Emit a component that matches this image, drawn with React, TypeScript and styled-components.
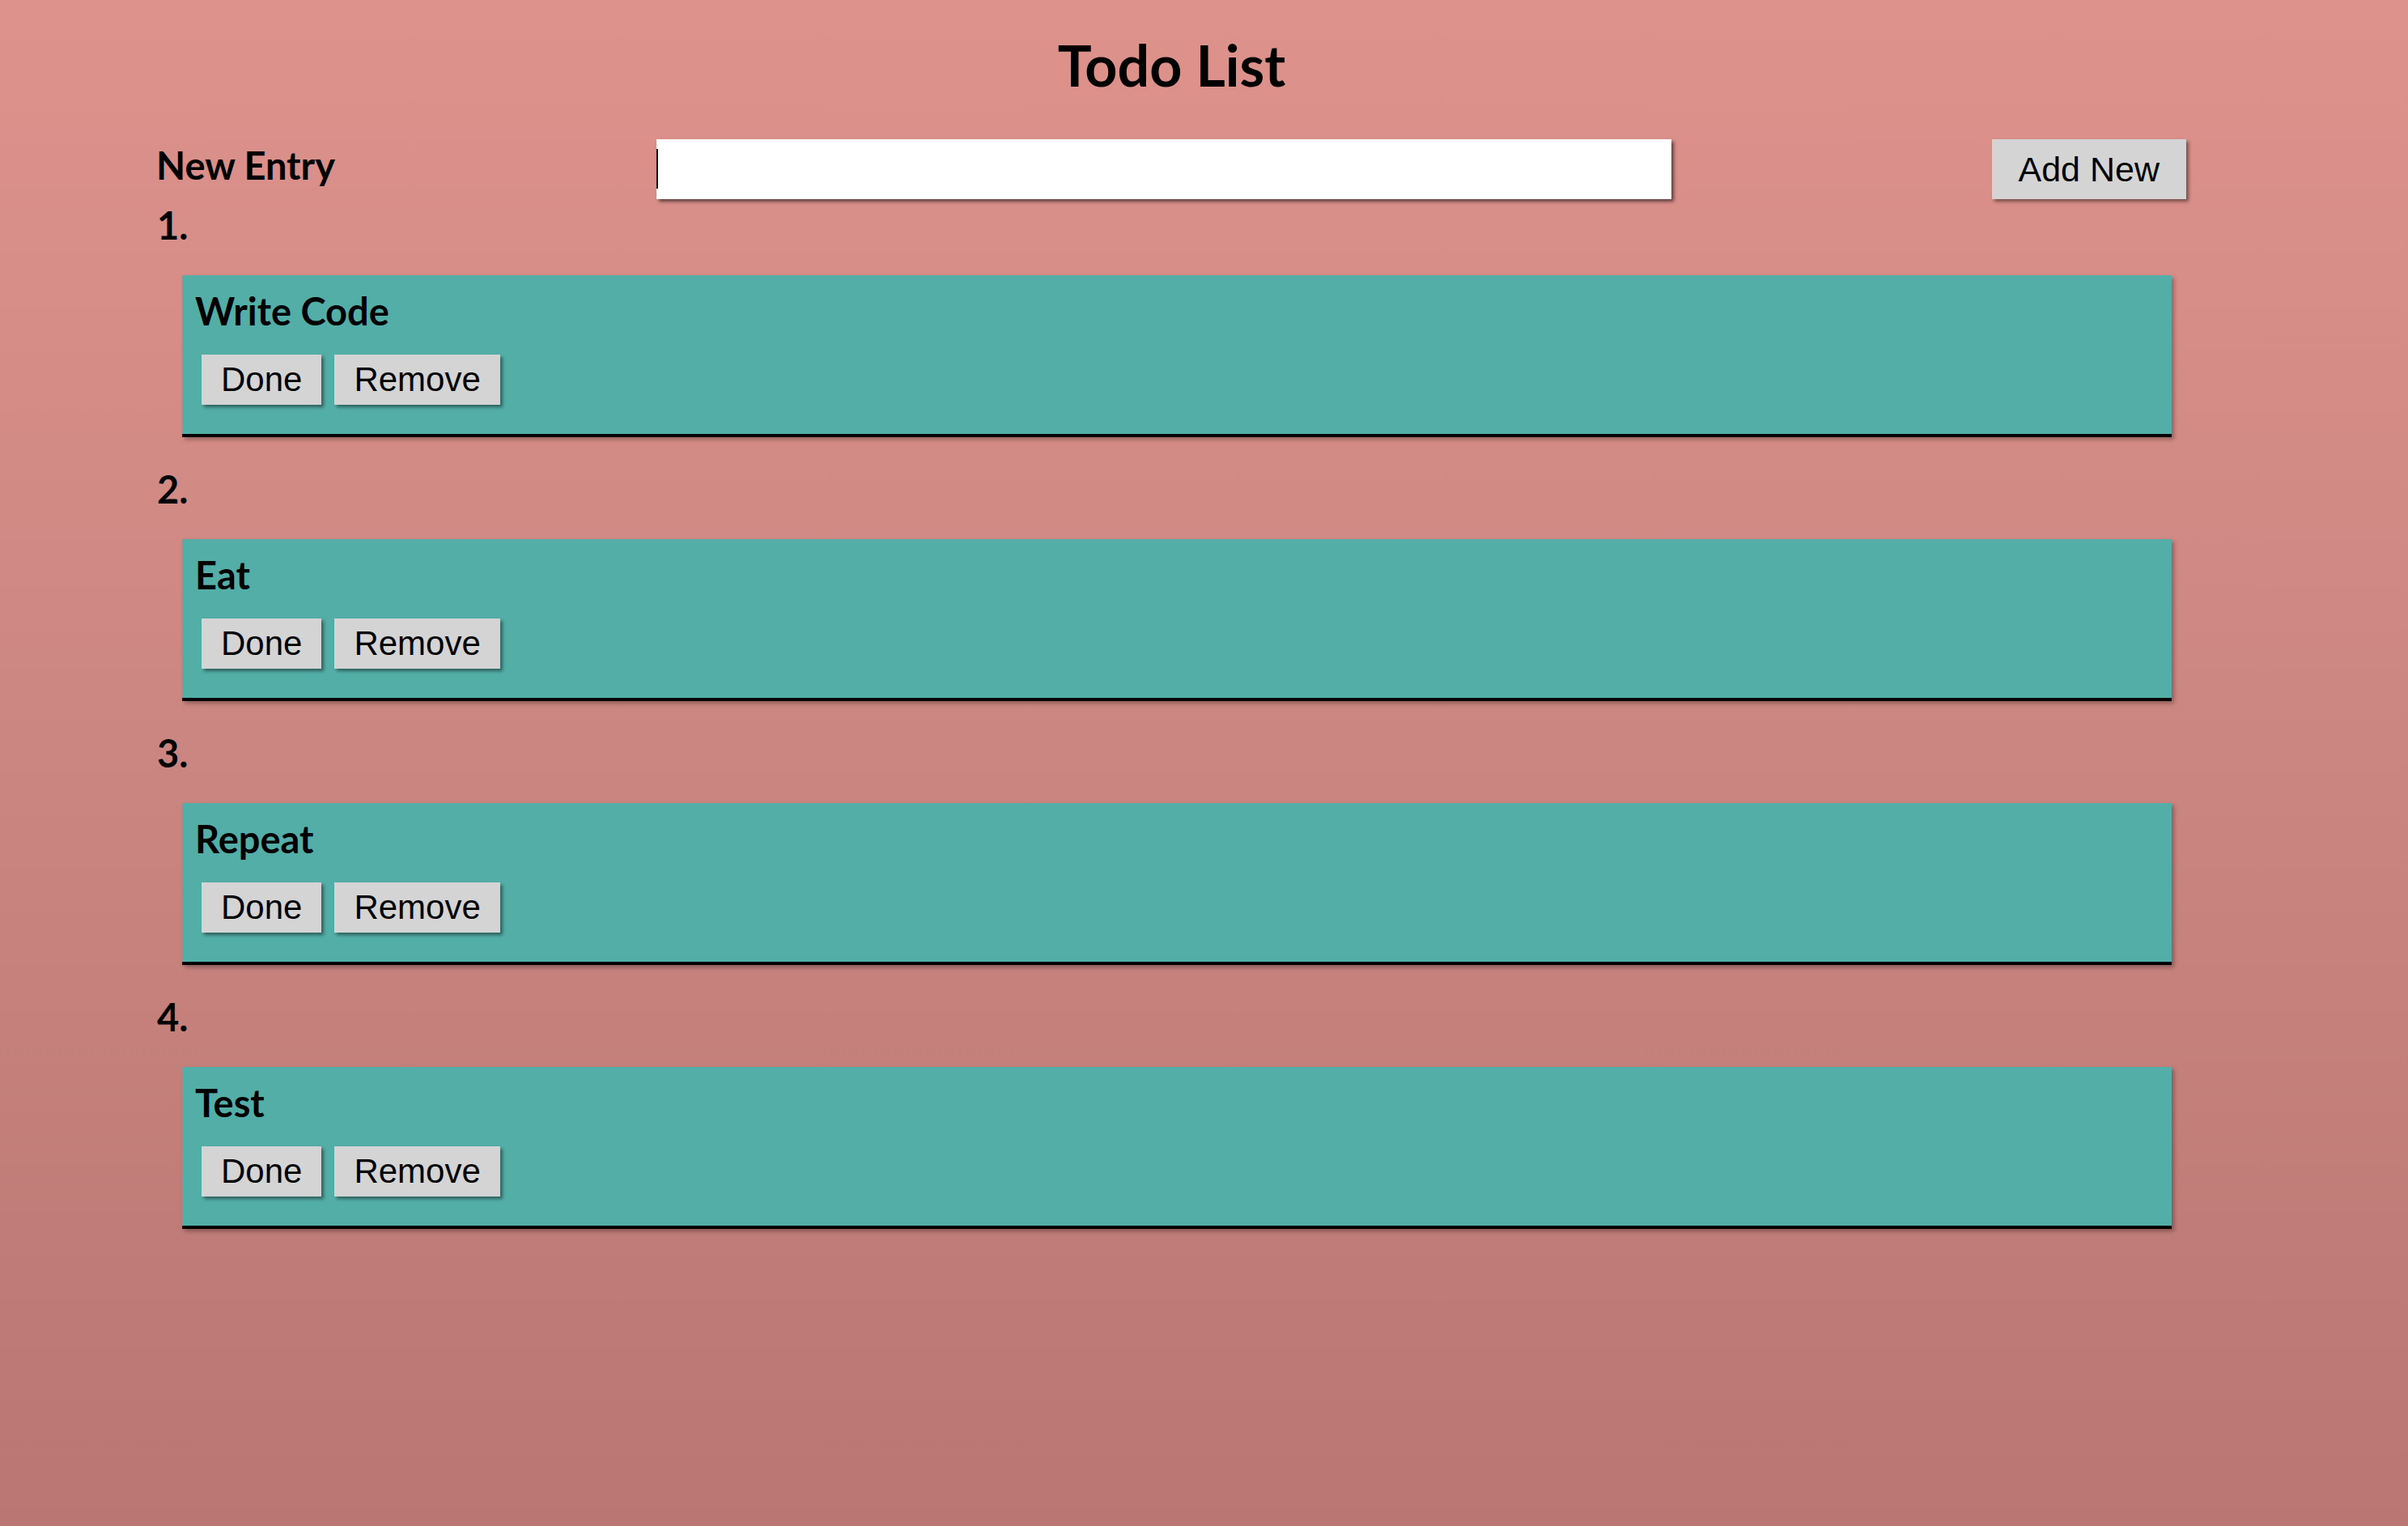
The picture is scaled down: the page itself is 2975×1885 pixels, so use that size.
import React from "react";
import styled, { createGlobalStyle } from "styled-components";

const GlobalStyle = createGlobalStyle`
  html, body {
    margin: 0;
    padding: 0;
    min-height: 100%;
  }
  body {
    min-height: 100vh;
    background: linear-gradient(to bottom, #de928c 0%, #cd8782 45%, #b97672 100%);
    font-family: Lato, "Noto Sans", sans-serif;
    color: #000;
  }
`;

const Page = styled.div`
  box-sizing: border-box;
  min-height: 100vh;
  padding: 39px 0 0 180px;
`;

const Container = styled.div`
  width: 2521px;
`;

const Title = styled.h1`
  margin: 0 0 51px;
  padding-left: 14px;
  text-align: center;
  font-family: Lato, sans-serif;
  font-weight: 700;
  font-size: 70px;
  line-height: 82px;
`;

const EntryRow = styled.div`
  display: grid;
  grid-template-columns: 631px 1254px 1fr auto;
  align-items: start;
`;

const Label = styled.label`
  font-weight: 700;
  font-size: 47px;
  line-height: 56px;
  padding: 4px 0 0 13px;
`;

const InputWrap = styled.div`
  position: relative;
  height: 74px;
`;

const TextInput = styled.input`
  box-sizing: border-box;
  width: 100%;
  height: 74px;
  border: none;
  outline: none;
  background: #fff;
  box-shadow: 3px 3px 4px rgba(0, 0, 0, 0.55);
  font-family: "Liberation Sans", Arial, sans-serif;
  font-size: 42px;
  padding: 0 2px;
  caret-color: #000;
`;

const Caret = styled.span`
  position: absolute;
  left: 0;
  top: 12px;
  width: 2px;
  height: 49px;
  background: #000;
  pointer-events: none;
`;

const Button = styled.button<{ $big?: boolean }>`
  border: none;
  border-radius: 0;
  background: #d4d4d4;
  color: #000;
  font-family: "Liberation Sans", Arial, sans-serif;
  font-size: ${(p) => (p.$big ? "43px" : "42px")};
  line-height: 48px;
  padding: ${(p) => (p.$big ? "13px 33px" : "7px 24px")};
  box-shadow: 3px 3px 4px rgba(0, 0, 0, 0.45);
  cursor: pointer;
`;

const AddButton = styled(Button)`
  grid-column: 4;
`;

const List = styled.ol`
  list-style: none;
  margin: 4px 0 0;
  padding: 0;
`;

const Item = styled.li`
  display: flex;
  flex-direction: column;
  padding-bottom: 36px;
`;

const Number = styled.div`
  font-weight: 700;
  font-size: 47px;
  line-height: 56px;
  padding-left: 14px;
  margin-bottom: 34px;
`;

const Card = styled.div`
  box-sizing: border-box;
  height: 200px;
  margin: 0 18px 0 45px;
  padding: 16px;
  background: #54aea8;
  border-bottom: 4px solid #000;
  box-shadow: 3px 3px 5px rgba(0, 0, 0, 0.3);
`;

const CardTitle = styled.div`
  font-weight: 700;
  font-size: 47px;
  line-height: 56px;
  margin-bottom: 26px;
`;

const Actions = styled.div`
  display: flex;
  gap: 16px;
  padding-left: 8px;
`;

const todos = ["Write Code", "Eat", "Repeat", "Test"];

export default function App() {
  return (
    <>
      <GlobalStyle />
      <Page>
        <Container>
          <Title>Todo List</Title>
          <EntryRow>
            <Label htmlFor="entry">New Entry</Label>
            <InputWrap>
              <TextInput id="entry" type="text" />
              <Caret />
            </InputWrap>
            <AddButton $big>Add New</AddButton>
          </EntryRow>
          <List>
            {todos.map((t, i) => (
              <Item key={t}>
                <Number>{i + 1}.</Number>
                <Card>
                  <CardTitle>{t}</CardTitle>
                  <Actions>
                    <Button>Done</Button>
                    <Button>Remove</Button>
                  </Actions>
                </Card>
              </Item>
            ))}
          </List>
        </Container>
      </Page>
    </>
  );
}
